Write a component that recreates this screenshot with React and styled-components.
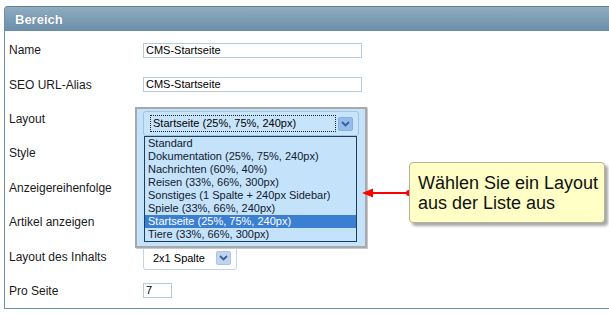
import React from 'react';
import styled, { createGlobalStyle, css } from 'styled-components';

const GlobalStyle = createGlobalStyle`
  html, body {
    margin: 0;
    padding: 0;
    background: #ffffff;
    overflow: hidden;
  }
  body {
    font-family: 'Liberation Sans', Arial, sans-serif;
    color: #000;
  }
`;

const Page = styled.div`
  width: 609px;
  height: 314px;
  padding: 6px 0 0 4px;
  box-sizing: border-box;
  overflow: hidden;
`;

const Panel = styled.section`
  width: 640px;
  border-left: 1px solid #6d90aa;
  border-bottom: 1px solid #6d90aa;
  border-top-left-radius: 4px;
  background: #fff;
`;

const Header = styled.div`
  height: 24px;
  border-top: 1px solid #5e8099;
  border-top-left-radius: 3px;
  background: linear-gradient(#90acc0, #6a8ea9);
  display: flex;
  align-items: center;
  padding-left: 10px;
  font-size: 13px;
  font-weight: bold;
  color: #fff;
  text-shadow: 0 0 1px rgba(40, 70, 95, 0.5);
`;

const Body = styled.div`
  position: relative;
  padding-top: 2px;
`;

const Row = styled.div`
  display: grid;
  grid-template-columns: 138px 1fr;
  align-items: center;
  height: 34.4px;
`;

const Label = styled.div`
  padding-left: 4px;
  font-size: 12px;
  color: #1a1a1a;
`;

const TextInput = styled.div`
  box-sizing: border-box;
  width: ${p => p.$width}px;
  height: 15px;
  border: 1px solid #b7cbdc;
  padding-left: 2px;
  font-size: 11px;
  line-height: 13px;
  color: #000;
`;

const SmallSelect = styled.div`
  box-sizing: border-box;
  width: 94px;
  height: 24px;
  border: 1px solid #c4d2e2;
  border-radius: 3px;
  display: flex;
  align-items: center;
  justify-content: space-between;
  padding: 0 5px 0 9px;
  font-size: 11px;
  margin-top: 2px;
`;

const DropButton = styled.span`
  box-sizing: border-box;
  width: 15px;
  height: 14px;
  border-radius: 2px;
  background: ${p => (p.$strong ? '#94bdee' : '#c0d3f2')};
  border: 1px solid ${p => (p.$strong ? '#86b0e2' : '#aec3e6')};
  display: flex;
  align-items: center;
  justify-content: center;
`;

const Chevron = () => (
  <svg width="9" height="6" viewBox="0 0 9 6">
    <path d="M1 1 L4.5 4.5 L8 1" fill="none" stroke="#3a5f8f" strokeWidth="1.8" />
  </svg>
);

const Popup = styled.div`
  position: absolute;
  left: 130px;
  top: 76px;
  width: 232px;
  height: 141px;
  box-sizing: border-box;
  background: #c4e2fa;
  border: 2px solid #a7a9ab;
  box-shadow: 1px 1px 0 #c9c9c9;
  padding: 2px 6px 0 6px;
`;

const OpenSelect = styled.div`
  box-sizing: border-box;
  height: 25px;
  border: 1px solid #9fc3e2;
  border-radius: 3px;
  background: #c8e4fb;
  display: flex;
  align-items: center;
  padding: 0 5px 0 6px;
  gap: 2px;
`;

const Focused = styled.div`
  box-sizing: border-box;
  width: 186px;
  height: 17px;
  border: 1px dotted #222;
  font-size: 11px;
  line-height: 15px;
  padding-left: 2px;
`;

const ListBox = styled.ul`
  list-style: none;
  margin: 0 2px 0 1px;
  padding: 0;
  border: 1px solid #1d3d5c;
  background: #c4e2fa;
`;

const Option = styled.li`
  height: 13px;
  line-height: 13px;
  font-size: 11px;
  padding-left: 3px;
  white-space: nowrap;
  color: #10202e;
  ${p =>
    p.$selected &&
    css`
      background: #3b7fd2;
      color: #fff;
    `}
`;

const Tooltip = styled.div`
  position: absolute;
  left: 404px;
  top: 131px;
  width: 196px;
  height: 61px;
  box-sizing: border-box;
  background: #ffffc6;
  border: 1px solid #b3b39a;
  border-radius: 4px;
  box-shadow: 3px 3px 3px rgba(0, 0, 0, 0.35);
  padding: 10px 0 0 8px;
  font-size: 18px;
  line-height: 20px;
  color: #111;
`;

const Arrow = styled.svg`
  position: absolute;
  left: 351px;
  top: 156px;
`;

const layouts = [
  'Standard',
  'Dokumentation (25%, 75%, 240px)',
  'Nachrichten (60%, 40%)',
  'Reisen (33%, 66%, 300px)',
  'Sonstiges (1 Spalte + 240px Sidebar)',
  'Spiele (33%, 66%, 240px)',
  'Startseite (25%, 75%, 240px)',
  'Tiere (33%, 66%, 300px)',
];

const App = () => (
  <>
    <GlobalStyle />
    <Page>
      <Panel>
        <Header>Bereich</Header>
        <Body>
          <Row>
            <Label>Name</Label>
            <TextInput $width={219}>CMS-Startseite</TextInput>
          </Row>
          <Row>
            <Label>SEO URL-Alias</Label>
            <TextInput $width={219}>CMS-Startseite</TextInput>
          </Row>
          <Row>
            <Label>Layout</Label>
            <div />
          </Row>
          <Row>
            <Label>Style</Label>
            <div />
          </Row>
          <Row>
            <Label>Anzeigereihenfolge</Label>
            <div />
          </Row>
          <Row>
            <Label>Artikel anzeigen</Label>
            <div />
          </Row>
          <Row>
            <Label>Layout des Inhalts</Label>
            <SmallSelect>
              2x1 Spalte
              <DropButton>
                <Chevron />
              </DropButton>
            </SmallSelect>
          </Row>
          <Row>
            <Label>Pro Seite</Label>
            <TextInput $width={29}>7</TextInput>
          </Row>

          <Popup>
            <OpenSelect>
              <Focused>Startseite (25%, 75%, 240px)</Focused>
              <DropButton $strong>
                <Chevron />
              </DropButton>
            </OpenSelect>
            <ListBox>
              {layouts.map(l => (
                <Option key={l} $selected={l.startsWith('Startseite')}>
                  {l}
                </Option>
              ))}
            </ListBox>
          </Popup>

          <Arrow width="56" height="12" viewBox="0 0 56 12">
            <line x1="10" y1="6" x2="53" y2="6" stroke="#ff0000" strokeWidth="2" />
            <path d="M6 6 L17 1.5 L17 10.5 Z" fill="#ff0000" />
            <circle cx="53" cy="6" r="3" fill="#ff0000" />
          </Arrow>

          <Tooltip>
            Wählen Sie ein Layout
            <br />
            aus der Liste aus
          </Tooltip>
        </Body>
      </Panel>
    </Page>
  </>
);

export default App;
